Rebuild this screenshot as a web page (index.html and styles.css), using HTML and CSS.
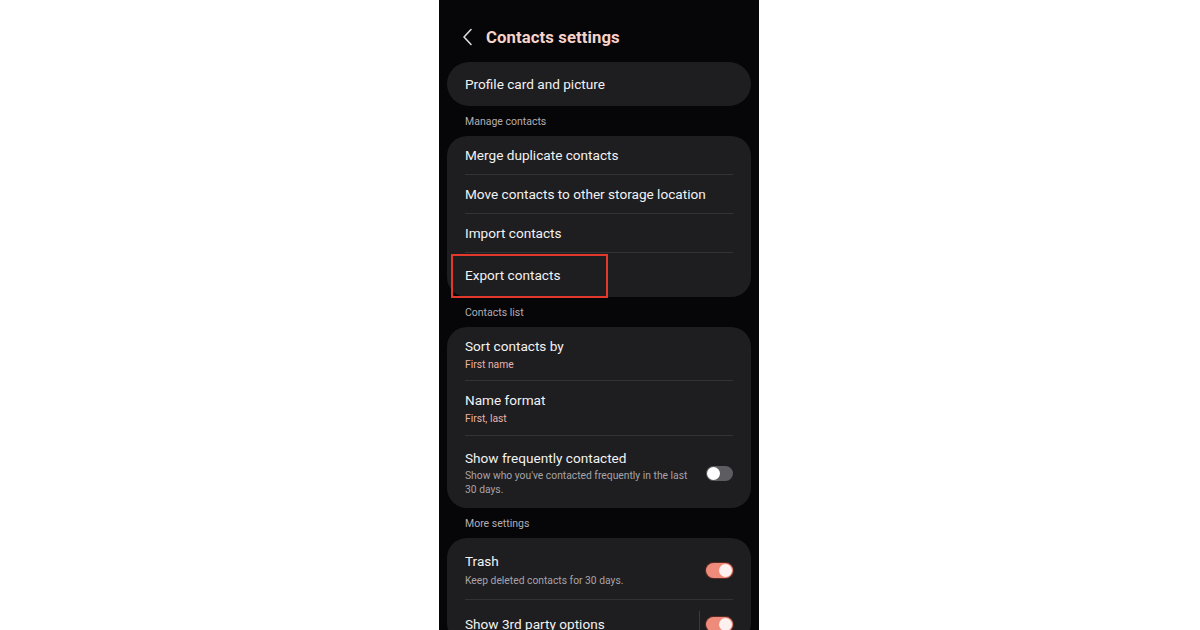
FILE: index.html
```html
<!DOCTYPE html>
<html>
<head>
<meta charset="utf-8">
<link rel="stylesheet" href="styles.css">
</head>
<body>
<div class="stage">
  <div class="phone">
    <div class="header">
      <svg class="back" width="12" height="18" viewBox="0 0 12 18"><path d="M9 1.5 L2 9 L9 16.5" fill="none" stroke="#dcdcdc" stroke-width="1.6" stroke-linecap="round" stroke-linejoin="round"/></svg>
      <div class="title">Contacts settings</div>
    </div>

    <div class="card single"><div class="row-text">Profile card and picture</div></div>

    <div class="label">Manage contacts</div>
    <div class="card">
      <div class="row simple">Merge duplicate contacts</div>
      <div class="row simple">Move contacts to other storage location</div>
      <div class="row simple">Import contacts</div>
      <div class="row simple last">Export contacts
        <div class="highlight"></div>
      </div>
    </div>

    <div class="label">Contacts list</div>
    <div class="card">
      <div class="row two">
        <div class="t">Sort contacts by</div>
        <div class="s pink">First name</div>
      </div>
      <div class="row two r2">
        <div class="t">Name format</div>
        <div class="s pink">First, last</div>
      </div>
      <div class="row two r3 last withtoggle">
        <div class="texts">
          <div class="t">Show frequently contacted</div>
          <div class="s grey">Show who you've contacted frequently in the last 30 days.</div>
        </div>
        <div class="toggle off"><div class="knob"></div></div>
      </div>
    </div>

    <div class="label">More settings</div>
    <div class="card">
      <div class="row two r4 withtoggle">
        <div class="texts">
          <div class="t">Trash</div>
          <div class="s grey">Keep deleted contacts for 30 days.</div>
        </div>
        <div class="toggle on"><div class="knob"></div></div>
      </div>
      <div class="row two r5 withtoggle last">
        <div class="texts">
          <div class="t">Show 3rd party options</div>
        </div>
        <div class="vsep"></div>
        <div class="toggle on"><div class="knob"></div></div>
      </div>
    </div>
  </div>
</div>
</body>
</html>
```

FILE: styles.css
```css
html, body {
  margin: 0;
  padding: 0;
  background: #ffffff;
}
.stage {
  width: 1200px;
  height: 630px;
  padding-left: 439px;
  box-sizing: border-box;
  overflow: hidden;
}
.phone {
  width: 320px;
  height: 630px;
  background: #060508;
  padding: 0 8px;
  box-sizing: border-box;
  overflow: hidden;
  font-family: Roboto, "Liberation Sans", sans-serif;
  color: #f2f2f2;
}
.header {
  height: 62px;
  padding-top: 12px;
  box-sizing: border-box;
  display: flex;
  align-items: center;
  padding-left: 15px;
}
.back {
  display: block;
  margin-right: 12px;
}
.title {
  font-size: 16.7px;
  font-weight: 700;
  color: #f6d3ca;
  letter-spacing: 0.1px;
}
.card {
  background: #1e1d20;
  border-radius: 20px;
  padding: 0 18px;
}
.card.single {
  height: 44px;
  display: flex;
  align-items: center;
  border-radius: 22px;
}
.row-text, .row.simple, .t {
  font-size: 13.6px;
}
.label {
  height: 30px;
  line-height: 31px;
  padding-left: 18px;
  font-size: 10.5px;
  color: #b3aeb2;
}
.row {
  border-bottom: 1px solid #333236;
  position: relative;
  box-sizing: border-box;
}
.row.last {
  border-bottom: none;
}
.row.simple {
  height: 39px;
  line-height: 38px;
}
.row.simple.last {
  height: 44px;
  line-height: 44px;
}
.highlight {
  position: absolute;
  left: -14px;
  top: 1px;
  width: 153px;
  height: 40px;
  border: 2px solid #e2392c;
}
.row.two {
  padding: 10px 0 8px;
}
.row.two.r2 {
  padding: 10px 0 9px;
}
.row.two.r3 {
  padding: 13px 0 11px;
}
.row.two.r4 {
  padding: 14px 0 11px;
}
.row.two.r5 {
  padding: 15px 0 10px;
}
.t {
  line-height: 18px;
}
.s {
  font-size: 10.3px;
  line-height: 14px;
  margin-top: 3px;
}
.r3 .s {
  margin-top: 2px;
}
.r4 .s {
  margin-top: 4px;
}
.s.pink {
  color: #e8b4aa;
}
.s.grey {
  color: #a8a4a8;
}
.withtoggle {
  display: flex;
  align-items: center;
}
.texts {
  flex: 1;
  padding-right: 12px;
}
.toggle {
  width: 27px;
  height: 15px;
  border-radius: 8px;
  position: relative;
  flex: none;
}
.toggle .knob {
  position: absolute;
  top: 1px;
  width: 13px;
  height: 13px;
  border-radius: 50%;
  background: #ffffff;
}
.toggle.off {
  background: #5d5c61;
  margin-top: 1px;
}
.toggle.off .knob {
  left: 1px;
}
.toggle.on {
  background: #ef8b7b;
  box-shadow: 0 0 0 1px #5a2a26;
}
.toggle.on .knob {
  right: 1px;
  background: #fdf1ef;
}
.vsep {
  width: 1px;
  align-self: stretch;
  background: #3a393d;
  margin-right: 6px;
  margin-top: -4px;
}
```
